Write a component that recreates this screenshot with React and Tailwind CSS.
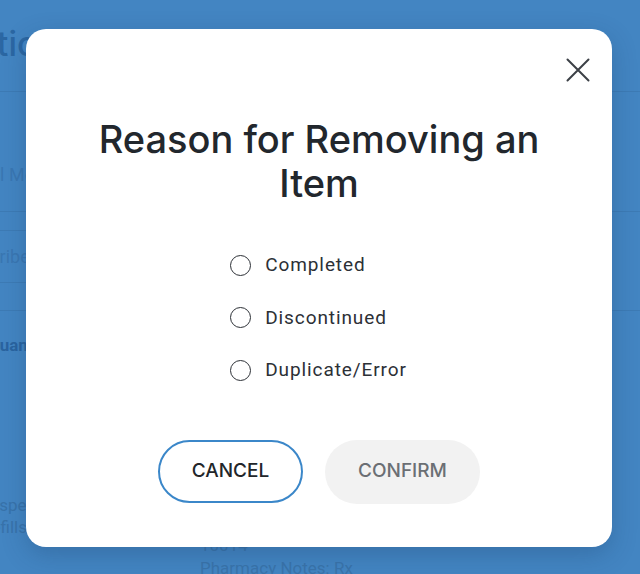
import { useState } from "react";

const reasons = ["Completed", "Discontinued", "Duplicate/Error"];

const CloseIcon = () => (
    <svg width="24" height="24" viewBox="0 0 24 24" fill="none" stroke="#3c4046" strokeWidth="2" strokeLinecap="round">
        <path d="M1.5 1.5 22.5 22.5M22.5 1.5 1.5 22.5" />
    </svg>
);

const BackgroundPage = () => (
    <div className="flex h-[574px] w-[640px] flex-col font-['Roboto',sans-serif]">
        <div className="flex h-[92px] shrink-0 items-center border-b border-[#3d7bb5] pb-[4px]">
            <span className="-ml-[123px] whitespace-nowrap font-['Inter',sans-serif] text-[34px] font-medium text-[#2b67a3]">Medication</span>
        </div>
        <div className="flex h-[120px] shrink-0 items-start border-b border-[#3d7bb5] pt-[72px]">
            <span className="-ml-[57px] whitespace-nowrap text-[18px] leading-[22px] text-[#3a77b2]">Original Med</span>
        </div>
        <div className="h-[19px] w-[300px] shrink-0 border-b border-[#3d7bb5]" />
        <div className="flex h-[52px] w-[300px] shrink-0 items-center border-b border-[#3d7bb5]">
            <span className="-ml-[46px] whitespace-nowrap text-[18px] text-[#3a77b2]">Prescriber</span>
        </div>
        <div className="h-[28px] shrink-0 border-b border-[#3d7bb5]" />
        <div className="flex h-[44px] shrink-0 items-end">
            <span className="-ml-[12px] whitespace-nowrap text-[17px] leading-[20px] font-bold text-[#2a64a0]">Quantity</span>
        </div>
        <div className="flex flex-1">
            <div className="flex w-[200px] shrink-0 flex-col pt-[139px] text-[17px] leading-[22px] text-[#3873ab]">
                <span className="-ml-[16px] whitespace-nowrap">Dispense</span>
                <span className="-ml-[19px] whitespace-nowrap">Refills</span>
            </div>
            <div className="flex flex-col pt-[179px] text-[17px] leading-[23px] text-[#3a74ab]">
                <span>10014</span>
                <span className="whitespace-nowrap">Pharmacy Notes: Rx</span>
            </div>
        </div>
    </div>
);

export default function App() {
    const [selected, setSelected] = useState(null);

    return (
        <div className="relative h-[574px] w-[640px] overflow-hidden bg-[#4385c2]">
            <BackgroundPage />
            <div className="absolute left-[26px] top-[29px] h-[518px] w-[586px] rounded-[20px] bg-white shadow-[0_8px_24px_rgba(20,50,90,0.25)]">
                <button className="absolute right-[22px] top-[29px]" aria-label="Close">
                    <CloseIcon />
                </button>
                <div className="flex flex-col items-center pt-[88px]">
                    <h2 className="max-w-[480px] text-center font-['Inter',sans-serif] text-[38px] font-medium leading-[44px] text-[#22272d]">
                        Reason for Removing an Item
                    </h2>
                    <div className="mt-[34px] flex flex-col pl-[1px] pr-[2px]">
                        {reasons.map((reason) => (
                            <label key={reason} className="flex h-[52.5px] cursor-pointer items-center gap-[14px]">
                                <span
                                    onClick={() => setSelected(reason)}
                                    className="flex h-[21px] w-[21px] items-center justify-center rounded-full border-[1.5px] border-[#2c3036]"
                                >
                                    {selected === reason && <span className="h-[11px] w-[11px] rounded-full bg-[#2c3036]" />}
                                </span>
                                <span className="font-['Roboto',sans-serif] text-[19px] tracking-[0.9px] text-[#2c3036]">{reason}</span>
                            </label>
                        ))}
                    </div>
                    <div className="mt-[43px] flex gap-[22px]">
                        <button className="h-[63px] w-[145px] rounded-full border-2 border-[#3b87c9] font-['Inter',sans-serif] text-[19px] font-medium text-[#22262a]">
                            CANCEL
                        </button>
                        <button className="h-[64px] w-[155px] rounded-full bg-[#f2f2f2] font-['Inter',sans-serif] text-[19px] font-medium text-[#6b6f74]">
                            CONFIRM
                        </button>
                    </div>
                </div>
            </div>
        </div>
    );
}
